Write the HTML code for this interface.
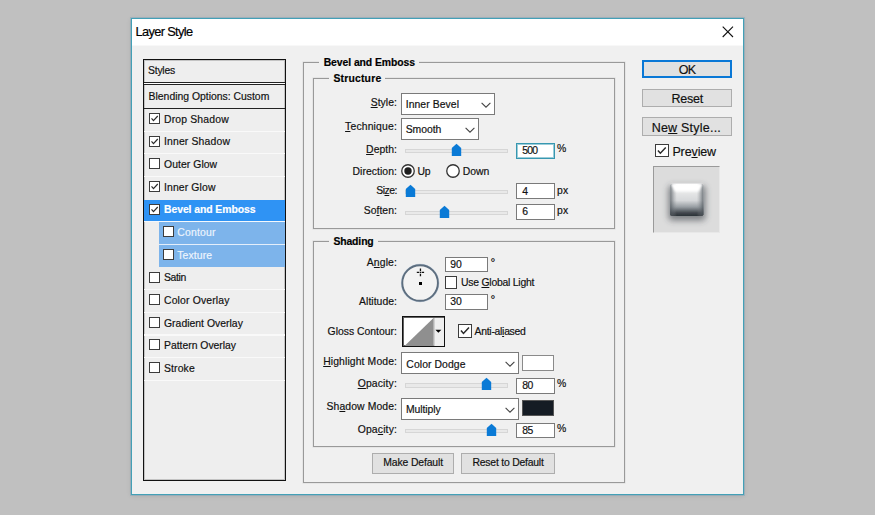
<!DOCTYPE html>
<html><head><meta charset="utf-8"><title>Layer Style</title>
<style>
html,body{margin:0;padding:0}
body{width:875px;height:515px;overflow:hidden;background:#c0c0c0;position:relative;font-family:"Liberation Sans",sans-serif}
.b{position:absolute;box-sizing:border-box}
.t{position:absolute;white-space:pre;line-height:20px;height:20px;color:#111;-webkit-text-stroke:0.18px currentColor}
u{text-decoration:underline;text-underline-offset:1px}
</style></head><body>
<div class="b" style="left:131px;top:18px;width:613px;height:477px;background:#f0f0f0;border:1px solid #43a0b6;box-shadow:0 0 0 1px rgba(80,150,190,.28), 0 1px 5px rgba(0,0,0,.10);"></div>
<div class="b" style="left:132px;top:19px;width:611px;height:26px;background:#fff;"></div>
<div class="b" style="left:132px;top:45px;width:611px;height:1px;background:#f8f8f8;"></div>
<svg class="b" style="left:720px;top:24px" width="16" height="16" viewBox="0 0 16 16"><path d="M2.7 2.7 L13 13 M13 2.7 L2.7 13" stroke="#111" stroke-width="1.1" fill="none"/></svg>
<div class="b" style="left:143px;top:59px;width:143px;height:422px;background:#eeeeee;border:1px solid #111;box-shadow:inset 0 0 0 1px rgba(0,0,0,.18);"></div>
<div class="b" style="left:144px;top:82px;width:141px;height:1px;background:#222;"></div>
<div class="b" style="left:144px;top:83px;width:141px;height:1px;background:#fff;"></div>
<div class="b" style="left:144px;top:84px;width:141px;height:1.2999999999999972px;background:#222;"></div>
<div class="b" style="left:144px;top:108px;width:141px;height:1.2000000000000028px;background:#222;"></div>
<div class="b" style="left:144px;top:130.5px;width:141px;height:1.3000000000000114px;background:#f9f9f9;"></div>
<div class="b" style="left:144px;top:153.2px;width:141px;height:1.3000000000000114px;background:#f9f9f9;"></div>
<div class="b" style="left:144px;top:175.8px;width:141px;height:1.299999999999983px;background:#f9f9f9;"></div>
<div class="b" style="left:144px;top:289.1px;width:141px;height:1.2999999999999545px;background:#f9f9f9;"></div>
<div class="b" style="left:144px;top:311.8px;width:141px;height:1.3000000000000114px;background:#f9f9f9;"></div>
<div class="b" style="left:144px;top:334.4px;width:141px;height:1.3000000000000114px;background:#f9f9f9;"></div>
<div class="b" style="left:144px;top:357.1px;width:141px;height:1.2999999999999545px;background:#f9f9f9;"></div>
<div class="b" style="left:144px;top:379.7px;width:141px;height:1.3000000000000114px;background:#f9f9f9;"></div>
<div class="b" style="left:144px;top:199.6px;width:141px;height:21.599999999999994px;background:#2f93f4;"></div>
<div class="b" style="left:158.7px;top:222.3px;width:126.30000000000001px;height:21.69999999999999px;background:#7db4eb;"></div>
<div class="b" style="left:158.7px;top:245.2px;width:126.30000000000001px;height:21.5px;background:#7db4eb;"></div>
<div class="b" style="left:144px;top:221.2px;width:141px;height:1.1000000000000227px;background:#f4f8fc;"></div>
<div class="b" style="left:158.7px;top:244px;width:126.30000000000001px;height:1.1999999999999886px;background:#e4eefa;"></div>
<div class="b" style="left:149.4px;top:113.0px;width:11.0px;height:11.0px;background:#fff;border:1.25px solid #3c3c3c;"><svg width="100%" height="100%" viewBox="0 0 13 13" style="position:absolute;left:0;top:0"><path d="M2.2 6.3 L5.0 9.5 L11.2 2.9" stroke="#2a2a2a" stroke-width="1.7" fill="none"/></svg></div>
<div class="b" style="left:149.4px;top:135.7px;width:11.0px;height:11.0px;background:#fff;border:1.25px solid #3c3c3c;"><svg width="100%" height="100%" viewBox="0 0 13 13" style="position:absolute;left:0;top:0"><path d="M2.2 6.3 L5.0 9.5 L11.2 2.9" stroke="#2a2a2a" stroke-width="1.7" fill="none"/></svg></div>
<div class="b" style="left:149.4px;top:158.3px;width:11.0px;height:11.0px;background:#fff;border:1.25px solid #3c3c3c;"></div>
<div class="b" style="left:149.4px;top:181.0px;width:11.0px;height:11.0px;background:#fff;border:1.25px solid #3c3c3c;"><svg width="100%" height="100%" viewBox="0 0 13 13" style="position:absolute;left:0;top:0"><path d="M2.2 6.3 L5.0 9.5 L11.2 2.9" stroke="#2a2a2a" stroke-width="1.7" fill="none"/></svg></div>
<div class="b" style="left:149.4px;top:203.6px;width:11.0px;height:11.0px;background:#fff;border:1.25px solid #3c3c3c;"><svg width="100%" height="100%" viewBox="0 0 13 13" style="position:absolute;left:0;top:0"><path d="M2.2 6.3 L5.0 9.5 L11.2 2.9" stroke="#2a2a2a" stroke-width="1.7" fill="none"/></svg></div>
<div class="b" style="left:162.6px;top:226.2px;width:11.300000000000011px;height:11.300000000000011px;background:#fff;border:1.25px solid #3c3c3c;"></div>
<div class="b" style="left:162.6px;top:248.9px;width:11.300000000000011px;height:11.299999999999983px;background:#fff;border:1.25px solid #3c3c3c;"></div>
<div class="b" style="left:149.4px;top:271.5px;width:11.0px;height:11.0px;background:#fff;border:1.25px solid #3c3c3c;"></div>
<div class="b" style="left:149.4px;top:294.1px;width:11.0px;height:11.0px;background:#fff;border:1.25px solid #3c3c3c;"></div>
<div class="b" style="left:149.4px;top:316.8px;width:11.0px;height:11.0px;background:#fff;border:1.25px solid #3c3c3c;"></div>
<div class="b" style="left:149.4px;top:339.4px;width:11.0px;height:11.0px;background:#fff;border:1.25px solid #3c3c3c;"></div>
<div class="b" style="left:149.4px;top:362.1px;width:11.0px;height:11.0px;background:#fff;border:1.25px solid #3c3c3c;"></div>
<div class="b" style="left:303px;top:62px;width:322px;height:421px;border:1px solid #999;box-shadow:0 0 0 0.5px rgba(150,150,150,.25);"></div><div class="b" style="left:319.3px;top:61px;width:99.69999999999999px;height:4px;background:#f0f0f0;"></div>
<div class="b" style="left:313px;top:78px;width:301.5px;height:151px;border:1px solid #999;box-shadow:0 0 0 0.5px rgba(150,150,150,.25);"></div><div class="b" style="left:329px;top:77px;width:56px;height:4px;background:#f0f0f0;"></div>
<div class="b" style="left:313px;top:241px;width:301.5px;height:206.3px;border:1px solid #999;box-shadow:0 0 0 0.5px rgba(150,150,150,.25);"></div><div class="b" style="left:329px;top:240px;width:48.5px;height:4px;background:#f0f0f0;"></div>
<div class="b" style="left:401.4px;top:93px;width:93.60000000000002px;height:22px;background:#fff;border:1px solid #7a7a7a;"></div><svg class="b" style="left:479.7px;top:100.0px" width="12" height="10" viewBox="0 0 12 10"><path d="M1.6 2.8 L6 7.2 L10.4 2.8" stroke="#444" stroke-width="1.1" fill="none"/></svg>
<div class="b" style="left:401.4px;top:117.5px;width:77.60000000000002px;height:22.099999999999994px;background:#fff;border:1px solid #7a7a7a;"></div><svg class="b" style="left:463.7px;top:124.55000000000001px" width="12" height="10" viewBox="0 0 12 10"><path d="M1.6 2.8 L6 7.2 L10.4 2.8" stroke="#444" stroke-width="1.1" fill="none"/></svg>
<div class="b" style="left:401.4px;top:352.4px;width:117.60000000000002px;height:22.0px;background:#fff;border:1px solid #7a7a7a;"></div><svg class="b" style="left:503.7px;top:359.4px" width="12" height="10" viewBox="0 0 12 10"><path d="M1.6 2.8 L6 7.2 L10.4 2.8" stroke="#444" stroke-width="1.1" fill="none"/></svg>
<div class="b" style="left:401.4px;top:397.5px;width:117.60000000000002px;height:22.0px;background:#fff;border:1px solid #7a7a7a;"></div><svg class="b" style="left:503.7px;top:404.5px" width="12" height="10" viewBox="0 0 12 10"><path d="M1.6 2.8 L6 7.2 L10.4 2.8" stroke="#444" stroke-width="1.1" fill="none"/></svg>
<div class="b" style="left:405.2px;top:148.9px;width:102.80000000000001px;height:4.5px;background:#e9e9e9;border:1px solid #d6d6d6;"></div><svg class="b" style="left:451.1px;top:143.1px" width="11" height="14" viewBox="0 0 11 14"><path d="M5.5 0.8 L10.2 5 L10.2 13 L0.8 13 L0.8 5 Z" fill="#0a7ad6"/></svg>
<div class="b" style="left:405.2px;top:189.7px;width:102.80000000000001px;height:4.5px;background:#e9e9e9;border:1px solid #d6d6d6;"></div><svg class="b" style="left:404.6px;top:183.9px" width="11" height="14" viewBox="0 0 11 14"><path d="M5.5 0.8 L10.2 5 L10.2 13 L0.8 13 L0.8 5 Z" fill="#0a7ad6"/></svg>
<div class="b" style="left:405.2px;top:210.5px;width:102.80000000000001px;height:4.5px;background:#e9e9e9;border:1px solid #d6d6d6;"></div><svg class="b" style="left:438.6px;top:204.7px" width="11" height="14" viewBox="0 0 11 14"><path d="M5.5 0.8 L10.2 5 L10.2 13 L0.8 13 L0.8 5 Z" fill="#0a7ad6"/></svg>
<div class="b" style="left:405.2px;top:383.2px;width:102.80000000000001px;height:4.5px;background:#e9e9e9;border:1px solid #d6d6d6;"></div><svg class="b" style="left:480.9px;top:377.4px" width="11" height="14" viewBox="0 0 11 14"><path d="M5.5 0.8 L10.2 5 L10.2 13 L0.8 13 L0.8 5 Z" fill="#0a7ad6"/></svg>
<div class="b" style="left:405.2px;top:428.8px;width:102.80000000000001px;height:4.5px;background:#e9e9e9;border:1px solid #d6d6d6;"></div><svg class="b" style="left:486.1px;top:423px" width="11" height="14" viewBox="0 0 11 14"><path d="M5.5 0.8 L10.2 5 L10.2 13 L0.8 13 L0.8 5 Z" fill="#0a7ad6"/></svg>
<div class="b" style="left:515.8px;top:142.5px;width:38.90000000000009px;height:16.099999999999994px;background:#fff;border:1px solid #3797b0;box-shadow:inset 0 0 0 1px rgba(58,155,179,.5);"></div>
<div class="b" style="left:515.8px;top:183.4px;width:38.90000000000009px;height:16.0px;background:#fff;border:1px solid #7a7a7a;"></div>
<div class="b" style="left:515.8px;top:204.4px;width:38.90000000000009px;height:16.0px;background:#fff;border:1px solid #7a7a7a;"></div>
<div class="b" style="left:445px;top:256.9px;width:42.69999999999999px;height:15.600000000000023px;background:#fff;border:1px solid #7a7a7a;"></div>
<div class="b" style="left:445px;top:294px;width:42.69999999999999px;height:15.600000000000023px;background:#fff;border:1px solid #7a7a7a;"></div>
<div class="b" style="left:515.8px;top:377.5px;width:38.90000000000009px;height:16.0px;background:#fff;border:1px solid #7a7a7a;"></div>
<div class="b" style="left:515.8px;top:422.6px;width:38.90000000000009px;height:15.699999999999989px;background:#fff;border:1px solid #7a7a7a;"></div>
<svg class="b" style="left:400.2px;top:163.3px" width="16" height="16" viewBox="0 0 16 16"><circle cx="8" cy="8" r="6.25" fill="#fff" stroke="#333" stroke-width="1.3"/><circle cx="8" cy="8" r="3.7" fill="#1e1e1e"/></svg>
<svg class="b" style="left:445.1px;top:163.3px" width="16" height="16" viewBox="0 0 16 16"><circle cx="8" cy="8" r="6.25" fill="#fff" stroke="#333" stroke-width="1.3"/></svg>
<svg class="b" style="left:398px;top:261px" width="44" height="44" viewBox="0 0 44 44"><circle cx="22.1" cy="22" r="18.6" fill="none" stroke="#9db4d0" stroke-width="1.2" opacity=".55"/><circle cx="22.1" cy="22" r="17.8" fill="#f3f3f3" stroke="#5d6e7f" stroke-width="1.9"/></svg>
<div class="b" style="left:419px;top:282.2px;width:3.1999999999999886px;height:3.1999999999999886px;background:#000;"></div>
<svg class="b" style="left:416px;top:268px" width="9" height="9" viewBox="0 0 9 9"><path d="M4.45 0.6 V3.2 M4.45 5.7 V8.3 M0.8 4.45 H3.3 M5.6 4.45 H8.1" stroke="#111" stroke-width="1.3"/><rect x="3.9" y="3.9" width="1.1" height="1.1" fill="#111"/></svg>
<div class="b" style="left:444.9px;top:276.3px;width:12.600000000000023px;height:12.600000000000023px;background:#fff;border:1.25px solid #3c3c3c;"></div>
<div class="b" style="left:458px;top:324px;width:13.600000000000023px;height:13.600000000000023px;background:#fff;border:1.25px solid #3c3c3c;"><svg width="100%" height="100%" viewBox="0 0 13 13" style="position:absolute;left:0;top:0"><path d="M2.2 6.3 L5.0 9.5 L11.2 2.9" stroke="#2a2a2a" stroke-width="1.7" fill="none"/></svg></div>
<div class="b" style="left:402px;top:316px;width:43px;height:31px;background:#fff;border:1px solid #111;box-shadow:inset 0 0 0 1px rgba(0,0,0,.62);"></div>
<svg class="b" style="left:403.5px;top:317.5px" width="40" height="28" viewBox="0 0 40 28"><path d="M0.5 28 L29.5 0 L29.5 28 Z" fill="#8f8f8f"/><rect x="29.5" y="0" width="10.5" height="28" fill="#efefef"/><rect x="29.5" y="0" width="0.8" height="28" fill="#8a8a8a"/><path d="M31.4 11.7 L37.4 11.7 L34.4 14.8 Z" fill="#000"/></svg>
<div class="b" style="left:522.2px;top:354.6px;width:31.59999999999991px;height:16.0px;background:#fff;border:1px solid #8a8a8a;"></div>
<div class="b" style="left:522.2px;top:400px;width:31.59999999999991px;height:15.600000000000023px;background:#151c24;border:1px solid #555;"></div>
<div class="b" style="left:372.1px;top:452.5px;width:82.39999999999998px;height:21.0px;background:#e1e1e1;border:1px solid #adadad;"></div>
<div class="b" style="left:461.2px;top:452.5px;width:94.30000000000001px;height:21.0px;background:#e1e1e1;border:1px solid #adadad;"></div>
<div class="b" style="left:642.3px;top:59.7px;width:89.70000000000005px;height:18.599999999999994px;background:#e1e1e1;border:2px solid #0a78d6;"></div>
<div class="b" style="left:642.3px;top:88.8px;width:89.70000000000005px;height:18.0px;background:#e1e1e1;border:1px solid #adadad;"></div>
<div class="b" style="left:642.3px;top:117.4px;width:89.70000000000005px;height:18.5px;background:#e1e1e1;border:1px solid #adadad;"></div>
<div class="b" style="left:655.4px;top:144.1px;width:13.299999999999955px;height:13.300000000000011px;background:#fff;border:1.25px solid #3c3c3c;"><svg width="100%" height="100%" viewBox="0 0 13 13" style="position:absolute;left:0;top:0"><path d="M2.2 6.3 L5.0 9.5 L11.2 2.9" stroke="#2a2a2a" stroke-width="1.7" fill="none"/></svg></div>
<div class="b" style="left:652.6px;top:166px;width:67.29999999999995px;height:66.69999999999999px;background:#dcdcdc;border-top:1px solid #9a9a9a;border-left:1px solid #9a9a9a;border-right:1px solid #e8e8e8;border-bottom:1px solid #e8e8e8;"></div>
<svg class="b" style="left:653.6px;top:167px" width="66" height="65" viewBox="0 0 66 65">
<defs>
<linearGradient id="g1" x1="0" y1="0" x2="0" y2="1"><stop offset="0" stop-color="#ffffff"/><stop offset="0.2" stop-color="#f2f3f3"/><stop offset="0.3" stop-color="#e4e5e6"/><stop offset="0.52" stop-color="#d6d8da"/><stop offset="0.72" stop-color="#979da2"/><stop offset="0.9" stop-color="#42484e"/><stop offset="1" stop-color="#2b3036"/></linearGradient>
<linearGradient id="g2" x1="0" y1="0" x2="1" y2="0"><stop offset="0" stop-color="#4d545a" stop-opacity=".75"/><stop offset="0.13" stop-color="#70767c" stop-opacity=".25"/><stop offset="0.2" stop-color="#888" stop-opacity="0"/><stop offset="0.8" stop-color="#888" stop-opacity="0"/><stop offset="0.87" stop-color="#70767c" stop-opacity=".25"/><stop offset="1" stop-color="#4d545a" stop-opacity=".75"/></linearGradient>
<filter id="bl" x="-40%" y="-40%" width="180%" height="180%"><feGaussianBlur stdDeviation="3"/></filter>
<filter id="b2" x="-10%" y="-10%" width="120%" height="120%"><feGaussianBlur stdDeviation="0.6"/></filter>
<filter id="b3" x="-20%" y="-40%" width="140%" height="180%"><feGaussianBlur stdDeviation="0.8"/></filter>
</defs>
<rect x="14.5" y="18.5" width="37" height="35" rx="4" fill="#2e343a" opacity=".55" filter="url(#bl)"/>
<g filter="url(#b2)"><rect x="16.2" y="16.8" width="33.2" height="32.2" rx="1.8" fill="url(#g1)"/><rect x="16.2" y="16.8" width="33.2" height="32.2" rx="1.8" fill="url(#g2)"/></g>
<path d="M16.6 16.8 L49 16.8 L44.6 24.2 L21 24.2 Z" fill="#fff" filter="url(#b3)"/>
</svg>
<div class="t" style="left:135.5px;top:22px;font-size:12.8px;color:#000;letter-spacing:-0.64px;">Layer Style</div>
<div class="t" style="left:148.0px;top:61px;font-size:10.4px;letter-spacing:-0.22px;">Styles</div>
<div class="t" style="left:148.6px;top:87px;font-size:10.4px;">Blending Options: Custom</div>
<div class="t" style="left:164.0px;top:110px;font-size:10.4px;letter-spacing:0.17px;">Drop Shadow</div>
<div class="t" style="left:164.0px;top:132px;font-size:10.4px;letter-spacing:0.16px;">Inner Shadow</div>
<div class="t" style="left:164.0px;top:155px;font-size:10.4px;letter-spacing:0.06px;">Outer Glow</div>
<div class="t" style="left:164.0px;top:178px;font-size:10.4px;letter-spacing:0.13px;">Inner Glow</div>
<div class="t" style="left:164.0px;top:200px;font-size:10.4px;font-weight:700;color:#fff;letter-spacing:-0.06px;">Bevel and Emboss</div>
<div class="t" style="left:177.3px;top:223px;font-size:10.4px;color:#eef5fd;letter-spacing:0.19px;">Contour</div>
<div class="t" style="left:177.3px;top:246px;font-size:10.4px;color:#eef5fd;letter-spacing:0.10px;">Texture</div>
<div class="t" style="left:164.0px;top:268px;font-size:10.4px;letter-spacing:-0.38px;">Satin</div>
<div class="t" style="left:164.0px;top:291px;font-size:10.4px;letter-spacing:0.16px;">Color Overlay</div>
<div class="t" style="left:164.0px;top:314px;font-size:10.4px;letter-spacing:0.02px;">Gradient Overlay</div>
<div class="t" style="left:164.0px;top:336px;font-size:10.4px;letter-spacing:-0.01px;">Pattern Overlay</div>
<div class="t" style="left:164.0px;top:359px;font-size:10.4px;letter-spacing:0.13px;">Stroke</div>
<div class="t" style="left:323.7px;top:53px;font-size:10.4px;font-weight:700;color:#000;letter-spacing:-0.07px;">Bevel and Emboss</div>
<div class="t" style="left:333.4px;top:69px;font-size:10.4px;font-weight:700;color:#000;letter-spacing:0.20px;">Structure</div>
<div class="t" style="left:333.4px;top:232px;font-size:10.4px;font-weight:700;color:#000;letter-spacing:-0.11px;">Shading</div>
<div class="t" style="left:370.7px;top:93px;font-size:10.4px;letter-spacing:0.05px;"><u>S</u>tyle:</div>
<div class="t" style="left:345.1px;top:117px;font-size:10.4px;letter-spacing:0.16px;"><u>T</u>echnique:</div>
<div class="t" style="left:366.1px;top:140px;font-size:10.4px;letter-spacing:0.04px;"><u>D</u>epth:</div>
<div class="t" style="left:352.5px;top:162px;font-size:10.4px;letter-spacing:0.06px;">Direction:</div>
<div class="t" style="left:376.2px;top:181px;font-size:10.4px;letter-spacing:-0.46px;">Si<u>z</u>e:</div>
<div class="t" style="left:363.7px;top:201px;font-size:10.4px;letter-spacing:0.05px;">So<u>f</u>ten:</div>
<div class="t" style="left:366.8px;top:253px;font-size:10.4px;letter-spacing:0.12px;">A<u>n</u>gle:</div>
<div class="t" style="left:359.1px;top:292px;font-size:10.4px;letter-spacing:0.04px;">Altitude:</div>
<div class="t" style="left:327.6px;top:322px;font-size:10.4px;">Gloss Contour:</div>
<div class="t" style="left:323.2px;top:352px;font-size:10.4px;letter-spacing:0.11px;"><u>H</u>ighlight Mode:</div>
<div class="t" style="left:357.7px;top:374px;font-size:10.4px;letter-spacing:0.15px;"><u>O</u>pacity:</div>
<div class="t" style="left:326.5px;top:397px;font-size:10.4px;letter-spacing:0.10px;">Sh<u>a</u>dow Mode:</div>
<div class="t" style="left:357.7px;top:420px;font-size:10.4px;letter-spacing:0.15px;">Opa<u>c</u>ity:</div>
<div class="t" style="left:405.7px;top:95px;font-size:10.4px;letter-spacing:0.07px;">Inner Bevel</div>
<div class="t" style="left:405.7px;top:120px;font-size:10.4px;letter-spacing:-0.05px;">Smooth</div>
<div class="t" style="left:406.3px;top:355px;font-size:10.4px;letter-spacing:0.08px;">Color Dodge</div>
<div class="t" style="left:406.0px;top:400px;font-size:10.4px;letter-spacing:-0.08px;">Multiply</div>
<div class="t" style="left:417.5px;top:162px;font-size:10.4px;letter-spacing:-0.35px;">Up</div>
<div class="t" style="left:462.8px;top:162px;font-size:10.4px;">Down</div>
<div class="t" style="left:522.2px;top:141px;font-size:10.4px;letter-spacing:-0.75px;">500</div>
<div class="t" style="left:522.2px;top:182px;font-size:10.4px;">4</div>
<div class="t" style="left:522.2px;top:202px;font-size:10.4px;">6</div>
<div class="t" style="left:557.1px;top:139px;font-size:10.4px;">%</div>
<div class="t" style="left:557.1px;top:181px;font-size:10.4px;letter-spacing:0.06px;">px</div>
<div class="t" style="left:557.1px;top:201px;font-size:10.4px;letter-spacing:0.06px;">px</div>
<div class="t" style="left:450.3px;top:255px;font-size:10.4px;letter-spacing:-0.13px;">90</div>
<div class="t" style="left:450.3px;top:292px;font-size:10.4px;letter-spacing:-0.13px;">30</div>
<div class="t" style="left:490.6px;top:253px;font-size:12px;">°</div>
<div class="t" style="left:490.6px;top:290px;font-size:12px;">°</div>
<div class="t" style="left:522.2px;top:376px;font-size:10.4px;letter-spacing:-0.43px;">80</div>
<div class="t" style="left:522.2px;top:421px;font-size:10.4px;letter-spacing:-0.43px;">85</div>
<div class="t" style="left:557.1px;top:374px;font-size:10.4px;">%</div>
<div class="t" style="left:557.1px;top:419px;font-size:10.4px;">%</div>
<div class="t" style="left:461.0px;top:273px;font-size:10.4px;letter-spacing:-0.23px;">Use <u>G</u>lobal Light</div>
<div class="t" style="left:474.6px;top:322px;font-size:10.4px;letter-spacing:-0.28px;">Anti-al<u>i</u>ased</div>
<div class="t" style="left:383.3px;top:453px;font-size:10.4px;letter-spacing:-0.13px;">Make Default</div>
<div class="t" style="left:472.5px;top:453px;font-size:10.4px;letter-spacing:-0.21px;">Reset to Default</div>
<div class="t" style="left:678.8px;top:60px;font-size:12.5px;letter-spacing:-0.88px;">OK</div>
<div class="t" style="left:671.5px;top:89px;font-size:12.5px;letter-spacing:-0.21px;">Reset</div>
<div class="t" style="left:651.7px;top:118px;font-size:12.5px;letter-spacing:0.22px;">Ne<u>w</u> Style...</div>
<div class="t" style="left:672.4px;top:142px;font-size:12.5px;letter-spacing:-0.12px;">Pre<u>v</u>iew</div>
</body></html>
